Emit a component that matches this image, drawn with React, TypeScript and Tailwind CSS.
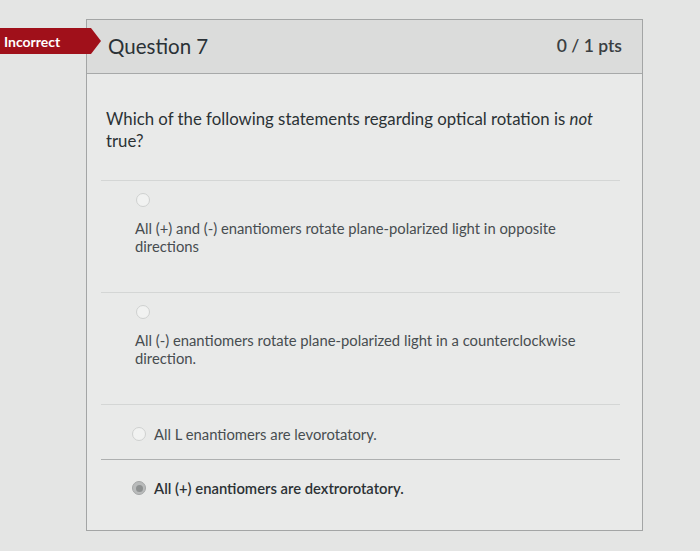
const answers = [
    { text: 'All (+) and (-) enantiomers rotate plane-polarized light in opposite directions', stacked: true, selected: false },
    { text: 'All (-) enantiomers rotate plane-polarized light in a counterclockwise direction.', stacked: true, selected: false },
    { text: 'All L enantiomers are levorotatory.', stacked: false, selected: false },
    { text: 'All (+) enantiomers are dextrorotatory.', stacked: false, selected: true },
];

function Radio({ selected }: { selected: boolean }) {
    if (selected) {
        return (
            <div className="w-[14px] h-[14px] rounded-full bg-[#b9bbbb] border border-[#a5a7a7] flex items-center justify-center shrink-0">
                <div className="w-[7px] h-[7px] rounded-full bg-[#8e9191]" />
            </div>
        );
    }
    return <div className="w-[14px] h-[14px] rounded-full bg-[#f1f2f1] border border-[#cfd1d0] shrink-0" />;
}

export default function App() {
    return (
        <div className="relative w-[700px] h-[551px] bg-[#e4e5e4] overflow-hidden" style={{ fontFamily: 'Lato, "Open Sans", sans-serif' }}>
            {/* Incorrect flag */}
            <div className="absolute left-0 top-[28px] z-10 flex items-center">
                <div className="h-[26px] w-[91px] bg-[#a0101a] flex items-center pl-[4px] text-white text-[14px] font-bold">
                    Incorrect
                </div>
                <div className="w-0 h-0 border-y-[13px] border-y-transparent border-l-[10px] border-l-[#a0101a]" />
            </div>

            <div className="absolute left-[86px] top-[19px] w-[557px] h-[512px] border border-[#a3a5a5] bg-[#e9eae9] flex flex-col">
                {/* Header */}
                <div className="h-[54px] bg-[#dbdcdb] border-b border-[#a7a9a9] flex items-center justify-between pl-[21px] pr-[20px] shrink-0">
                    <span className="text-[20.5px] text-[#2a3136]">Question 7</span>
                    <span className="text-[17.5px] font-semibold text-[#3a3f42]">0 / 1 pts</span>
                </div>

                {/* Body */}
                <div className="pt-[34px] pl-[19px] w-[520px] text-[16.8px] leading-[22px] text-[#2b3235] shrink-0">
                    Which of the following statements regarding optical rotation is <em>not</em> true?
                </div>

                <div className="mt-[28px] ml-[14px] mr-[22px] flex flex-col">
                    {answers.map((a, i) => (
                        <div
                            key={i}
                            className={`border-t ${i === 3 ? 'border-[#aeb0b0] h-[70px] pt-[19px]' : 'border-[#d4d6d5]'} ${a.stacked ? 'h-[112px] pt-[12px]' : i === 2 ? 'h-[55px] pt-[20px]' : ''}`}
                        >
                            {a.stacked ? (
                                <div className="pl-[34px] flex flex-col">
                                    <div className="pl-[1px]">
                                        <Radio selected={a.selected} />
                                    </div>
                                    <div className="mt-[12px] w-[460px] text-[14.8px] leading-[18px] text-[#474d50]">{a.text}</div>
                                </div>
                            ) : (
                                <div className="pl-[31px] flex items-center gap-[8px]">
                                    <Radio selected={a.selected} />
                                    <span className={`text-[14.8px] leading-[18px] ${a.selected ? 'text-[#2c3235] font-semibold' : 'text-[#474d50]'}`}>
                                        {a.text}
                                    </span>
                                </div>
                            )}
                        </div>
                    ))}
                </div>
            </div>
        </div>
    );
}
